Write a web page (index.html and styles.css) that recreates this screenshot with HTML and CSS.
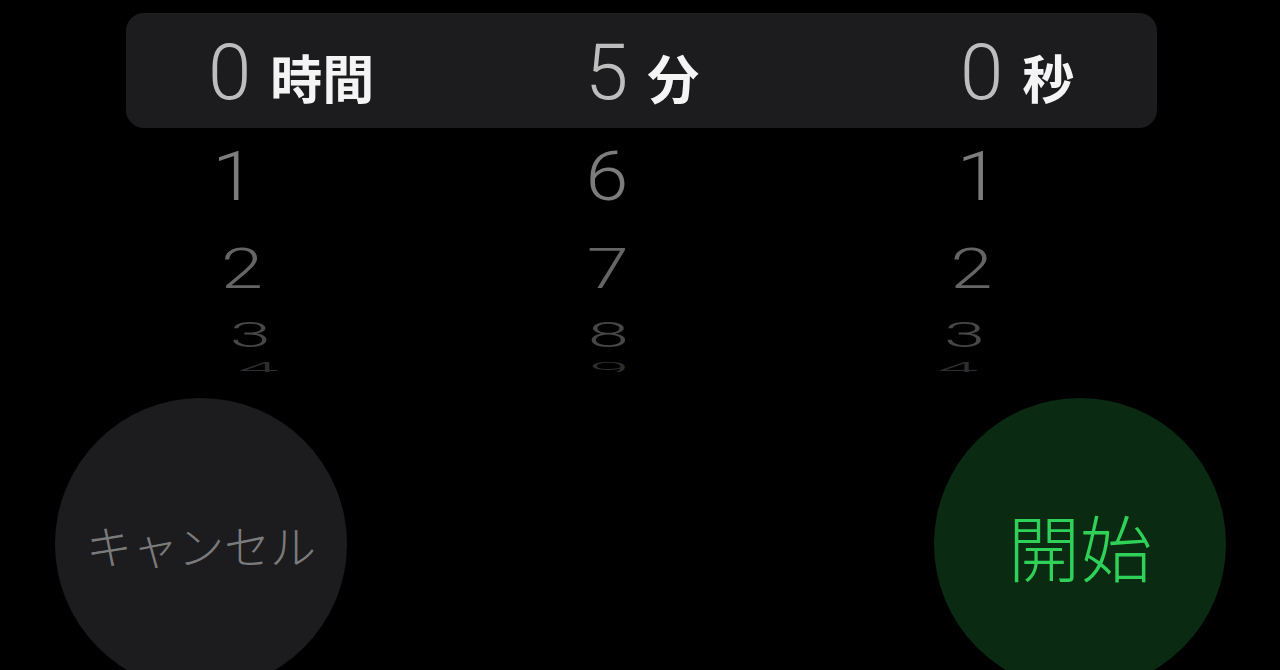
FILE: index.html
```html
<!DOCTYPE html>
<html lang="ja">
<head>
<meta charset="utf-8">
<title>タイマー</title>
<link rel="stylesheet" href="styles.css">
</head>
<body>
<main class="timer">
  <section class="picker">
    <div class="row selected">
      <div class="cell"><span class="num">0</span><span class="unit">時間</span></div>
      <div class="cell"><span class="num">5</span><span class="unit">分</span></div>
      <div class="cell"><span class="num">0</span><span class="unit">秒</span></div>
    </div>
    <div class="row r1"><span class="num">1</span><span class="num">6</span><span class="num">1</span></div>
    <div class="row r2"><span class="num">2</span><span class="num">7</span><span class="num">2</span></div>
    <div class="row r3"><span class="num">3</span><span class="num">8</span><span class="num">3</span></div>
    <div class="row r4"><span class="num">4</span><span class="num">9</span><span class="num">4</span></div>
  </section>
  <div class="actions">
    <button class="circle cancel">キャンセル</button>
    <button class="circle start">開始</button>
  </div>
</main>
</body>
</html>
```
FILE: styles.css
```css
html, body {
  margin: 0;
  height: 100%;
  background: #000;
  overflow: hidden;
}

.timer {
  width: 1280px;
  height: 670px;
  overflow: hidden;
}

.picker {
  box-sizing: border-box;
  height: 372px;
  padding-top: 13px;
  overflow: hidden;
}

.row {
  display: grid;
  grid-template-columns: 377px 375px 1fr;
  margin-left: 126px;
  width: 1031px;
  box-sizing: border-box;
  padding-left: 82px;
  font-family: Roboto, "Liberation Sans", sans-serif;
  font-weight: 300;
  font-size: 78px;
  transform-origin: 515px 50%;
}

.selected {
  height: 115px;
  padding-top: 4px;
  align-items: center;
  background: #1c1c1e;
  border-radius: 18px;
}

.cell {
  display: flex;
  align-items: baseline;
  gap: 19px;
}

.selected .num {
  color: #bdbdbd;
  line-height: 1;
}

.unit {
  font-family: "Noto Sans CJK JP", sans-serif;
  font-weight: 700;
  font-size: 52px;
  line-height: 1;
  color: #f4f4f4;
}

.r1 {
  height: 98px;
  line-height: 98px;
  color: #7c7c7c;
  transform: scale(0.99, 0.875);
}

.r2 {
  height: 88px;
  line-height: 88px;
  color: #656565;
  transform: scale(0.97, 0.7);
}

.r3 {
  height: 42px;
  line-height: 42px;
  color: #474747;
  transform: scale(0.95, 0.45);
}

.r4 {
  height: 24px;
  line-height: 24px;
  color: #2e2e2e;
  transform: scale(0.93, 0.22);
}

.actions {
  display: flex;
  justify-content: space-between;
  margin-top: 26px;
  padding: 0 54px 0 55px;
}

.circle {
  width: 292px;
  height: 292px;
  border: none;
  border-radius: 50%;
  padding: 0;
  display: flex;
  align-items: center;
  justify-content: center;
  font-family: "Noto Sans CJK JP", sans-serif;
  font-weight: 300;
}

.cancel {
  background: #1c1c1e;
  color: #7b7b7b;
  font-size: 46px;
}

.start {
  background: #0a2a12;
  color: #30d158;
  font-size: 72px;
}
```
